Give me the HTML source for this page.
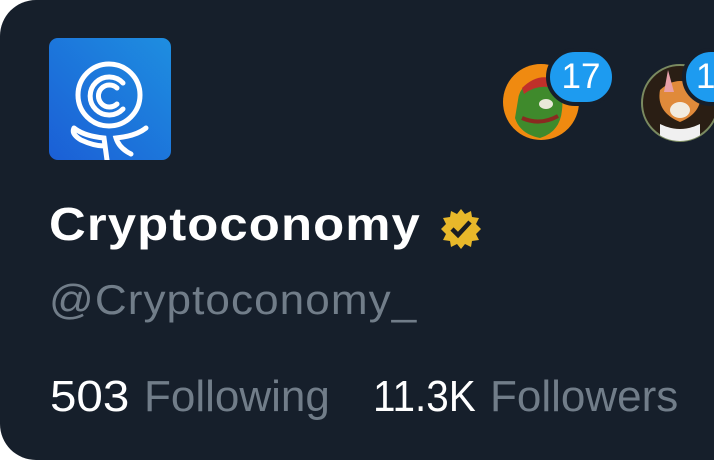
<!DOCTYPE html>
<html><head><meta charset="utf-8"><style>
html,body{margin:0;padding:0;background:#fff;}
.card{position:absolute;left:0;top:0;width:714px;height:460px;background:#161f2b;border-radius:36px 0 0 36px;overflow:hidden;font-family:"Liberation Sans",sans-serif;}
.t{position:absolute;white-space:nowrap;transform-origin:0 0;line-height:1;}
</style></head><body><div class="card">
<svg style="position:absolute;left:49px;top:38px" width="122" height="122" viewBox="0 0 122 122">
<defs><linearGradient id="g" x1="0" y1="1" x2="1" y2="0"><stop offset="0" stop-color="#1b5fd6"/><stop offset="1" stop-color="#1e8ee0"/></linearGradient></defs>
<rect width="122" height="122" rx="9" fill="url(#g)"/>
<g fill="none" stroke="#fff" stroke-width="5" stroke-linecap="round">
<circle cx="60" cy="57" r="31"/>
<path d="M74 45 A19 19 0 1 0 74 71"/>
<path d="M68 50 A11 11 0 1 0 68 66"/>
<path d="M25 90 Q35 98 55 100 L58 122 M97 90 Q87 98 67 100 Q70 110 82 116 M25 90 Q22 96 32 102 Q45 108 55 108"/>
</g></svg>
<div class="t" style="left:49px;top:201px;font-size:46px;font-weight:bold;color:#fff;letter-spacing:1px;transform:scaleX(1.105)">Cryptoconomy</div>
<svg style="position:absolute;left:439px;top:207px" width="44" height="44" viewBox="0 0 44 44">
<polygon fill="#e8b82a" points="22,2 26,7 32,4 33,10 40,11 37,17 42,22 37,27 40,33 33,34 32,40 26,37 22,42 18,37 12,40 11,34 4,33 7,27 2,22 7,17 4,11 11,10 12,4 18,7"/>
<path d="M13 22 L19 28 L31 15" fill="none" stroke="#1a1d22" stroke-width="4.5"/>
</svg>
<div class="t" style="left:49px;top:279px;font-size:42px;color:#717d89;letter-spacing:1px;transform:scaleX(1.05)">@Cryptoconomy_</div>
<div class="t" style="left:50px;top:375px;font-size:44px;color:#fff;transform:scaleX(1.08)">503</div>
<div class="t" style="left:144px;top:375px;font-size:44px;color:#717d89;">Following</div>
<div class="t" style="left:373px;top:375px;font-size:44px;color:#fff;transform:scaleX(0.92)">11.3K</div>
<div class="t" style="left:490px;top:375px;font-size:44px;color:#717d89;">Followers</div>
<svg style="position:absolute;left:500px;top:60px" width="90" height="90" viewBox="0 0 90 90">
<circle cx="41" cy="42" r="38" fill="#f08a10"/>
<path d="M18 40 Q20 20 45 22 Q65 25 62 50 Q60 72 40 78 Q20 74 15 58Z" fill="#3f8a2c"/>
<path d="M22 28 Q40 10 60 22 L58 30 Q40 22 24 34Z" fill="#c0302a"/>
<ellipse cx="46" cy="44" rx="7" ry="5" fill="#e8e8d8"/>
<path d="M22 58 Q40 66 58 56" stroke="#8a2a20" stroke-width="4" fill="none"/>
</svg>
<svg style="position:absolute;left:640px;top:62px" width="74" height="82" viewBox="0 0 74 82">
<defs><clipPath id="c"><circle cx="40" cy="41" r="38"/></clipPath></defs>
<circle cx="40" cy="41" r="38" fill="#2a1e14" stroke="#7a8a60" stroke-width="2"/>
<g clip-path="url(#c)">
<path d="M20 28 Q40 10 60 28 Q64 50 40 60 Q16 50 20 28Z" fill="#e08a3a"/>
<path d="M28 8 L34 30 L24 30Z M52 8 L46 30 L56 30Z" fill="#e8a0a8"/>
<ellipse cx="40" cy="48" rx="10" ry="8" fill="#f2ece0"/>
<path d="M20 62 Q40 72 60 62 L60 80 L20 80Z" fill="#f0f0f0"/>
</g>
</svg>
<div style="position:absolute;left:546px;top:48px;width:62px;height:50px;border-radius:29px;background:#1d9bf0;border:4px solid #161f2b;color:#fff;font-family:'Liberation Sans',sans-serif;font-size:35px;line-height:50px;text-align:center;">17</div>
<div style="position:absolute;left:682px;top:48px;width:62px;height:50px;border-radius:29px;background:#1d9bf0;border:4px solid #161f2b;color:#fff;font-family:'Liberation Sans',sans-serif;font-size:35px;line-height:50px;text-indent:10px;">1</div>
</div></body></html>
